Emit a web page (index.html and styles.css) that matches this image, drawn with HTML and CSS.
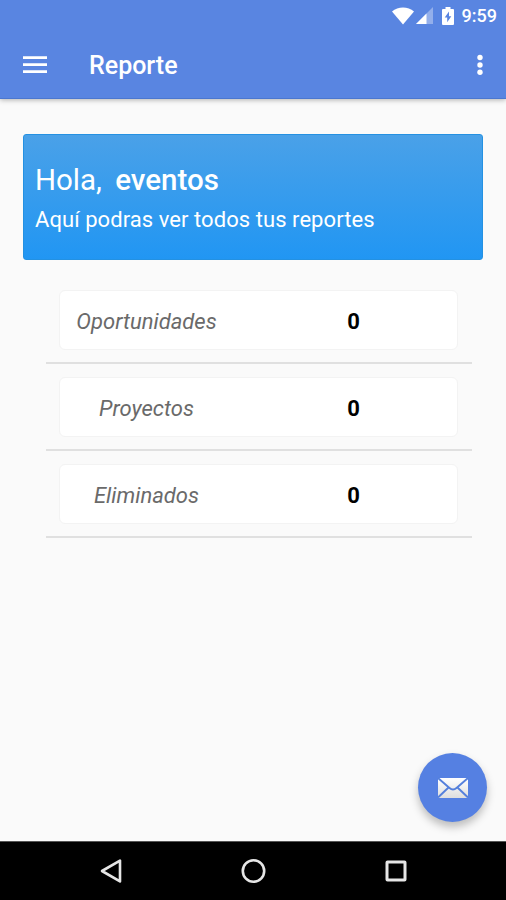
FILE: index.html
```
<!DOCTYPE html>
<html lang="es">
<head>
    <meta charset="UTF-8">
    <meta name="viewport" content="width=device-width, initial-scale=1.0">
    <title>Reporte</title>
    <link rel="stylesheet" href="styles.css">
</head>
<body>
    <header class="header">
        <div class="status-bar">
            <svg class="wifi" width="22" height="18" viewBox="0 0 22 18">
                <path d="M0 4.500C6-1 16-1 22 4.500L11 17.500z" fill="#fff"/>
            </svg>
            <svg class="signal" width="17" height="17" viewBox="0 0 17 17">
                <path d="M17 0V17H0z" fill="#fff" fill-opacity=".35"/>
                <path d="M10.500 6.500V17H0z" fill="#fff"/>
            </svg>
            <svg class="battery" width="12" height="18" viewBox="0 0 12 18">
                <path d="M3.500 0h5v2H11q1 0 1 1v14q0 1-1 1H1q-1 0-1-1V3q0-1 1-1h2.500z" fill="#fff"/>
                <path d="M7 4.500L2.700 10.500H5.200V15.200L9.300 9.200H7z" fill="#5985e1"/>
            </svg>
            <span class="time">9:59</span>
        </div>
        <div class="toolbar">
            <button class="icon-button" aria-label="Menu">
                <svg width="24" height="18" viewBox="0 0 24 18">
                    <path d="M0 1.700h24M0 8.700h24M0 15.700h24" stroke="#fff" stroke-width="2.800"/>
                </svg>
            </button>
            <h1>Reporte</h1>
            <button class="icon-button" aria-label="Opciones">
                <svg width="6" height="22" viewBox="0 0 6 22" fill="#fff">
                    <circle cx="3" cy="3.500" r="2.700"/>
                    <circle cx="3" cy="11" r="2.700"/>
                    <circle cx="3" cy="18.300" r="2.700"/>
                </svg>
            </button>
        </div>
    </header>

    <main class="content">
        <section class="welcome">
            <p class="greeting">Hola, <strong>eventos</strong></p>
            <p class="subtitle">Aquí podras ver todos tus reportes</p>
        </section>

        <ul class="reports">
            <li>
                <div class="report">
                    <span class="label">Oportunidades</span>
                    <span class="count">0</span>
                </div>
            </li>
            <li>
                <div class="report">
                    <span class="label">Proyectos</span>
                    <span class="count">0</span>
                </div>
            </li>
            <li>
                <div class="report">
                    <span class="label">Eliminados</span>
                    <span class="count">0</span>
                </div>
            </li>
        </ul>

        <!-- Floating mail button -->
        <button class="fab" aria-label="Correo">
            <svg width="32" height="22" viewBox="0 0 32 22">
                <defs>
                    <linearGradient id="paper" x1="0" y1="0" x2="0" y2="1">
                        <stop offset="0" stop-color="#fff"/>
                        <stop offset="1" stop-color="#dedede"/>
                    </linearGradient>
                </defs>
                <rect x="1" y="1" width="30" height="20" rx="1" fill="url(#paper)"/>
                <path d="M1 1L12.500 11Q16 14 19.500 11L31 1M1 20.500L11.500 10.500M31 20.500L20.500 10.500" fill="none" stroke="#5580dc" stroke-width="1.900"/>
            </svg>
        </button>
    </main>

    <nav class="nav-bar">
        <svg width="22" height="26" viewBox="0 0 22 26">
            <path d="M2 13L20 2.600V23.400z" fill="none" stroke="#e6e6e6" stroke-width="2.600" stroke-linejoin="round"/>
        </svg>
        <svg width="26" height="26" viewBox="0 0 26 26">
            <circle cx="12.500" cy="13" r="10.700" fill="none" stroke="#e6e6e6" stroke-width="2.600"/>
        </svg>
        <svg width="22" height="22" viewBox="0 0 22 22">
            <rect x="2" y="2" width="18" height="18" rx=".5" fill="none" stroke="#e6e6e6" stroke-width="3"/>
        </svg>
    </nav>
</body>
</html>
```

FILE: styles.css
```
* {
    box-sizing: border-box;
}

body {
    margin: 0;
    height: 100vh;
    display: flex;
    flex-direction: column;
    font-family: Roboto, sans-serif;
    background: #fafafa;
    overflow: hidden;
}

h1, p, ul {
    margin: 0;
    padding: 0;
}

svg {
    display: block;
}

button {
    border: none;
    padding: 0;
    cursor: pointer;
}

.header {
    height: 99px;
    background: #5985e1;
    border-bottom: 1px solid #4b77cf;
    color: #fff;
    box-shadow: 0 1px 5px rgba(0, 0, 0, 0.3);
}

.status-bar {
    height: 31px;
    padding-right: 9px;
    display: flex;
    align-items: center;
    justify-content: flex-end;
}

.wifi {
    margin-right: 2px;
}

.battery {
    margin: 0 8px 0 9px;
}

.time {
    font-size: 18px;
    font-weight: 500;
    line-height: 32px;
}

.toolbar {
    height: 67px;
    padding: 0 23px;
    display: flex;
    align-items: center;
}

.icon-button {
    background: none;
}

.toolbar h1 {
    flex: 1;
    margin-left: 42px;
    padding-top: 2px;
    font-size: 25px;
    font-weight: 500;
    line-height: 66px;
}

.content {
    flex: 1;
    padding: 35px 23px 0;
    position: relative;
}

.welcome {
    height: 126px;
    padding: 26px 12px 0;
    border: 1px solid #2491e2;
    border-radius: 3px;
    background: linear-gradient(#4aa1e8, #2196f3);
    color: #fff;
}

.greeting {
    margin-left: -1px;
    font-size: 29.5px;
    font-weight: 400;
    line-height: 38px;
}

.greeting strong {
    margin-left: 6px;
    font-weight: 500;
}

.subtitle {
    margin-top: 7px;
    margin-left: -1px;
    font-size: 22px;
    line-height: 28px;
    letter-spacing: 0.06px;
}

.reports {
    margin: 17px 11px 0 23px;
    list-style: none;
}

.reports li {
    height: 87px;
    padding: 13px 14px 0 13px;
    border-bottom: 2px solid #e0e0e0;
}

.report {
    height: 60px;
    padding-top: 2px;
    display: grid;
    grid-template-columns: 173px 207px;
    justify-content: space-between;
    align-items: center;
    border: 1px solid #f3f3f3;
    border-radius: 6px;
    background: #fff;
    text-align: center;
    font-size: 22px;
}

.label {
    color: #6a6a6a;
    font-style: italic;
}

.count {
    color: #000;
    font-weight: 700;
}

.fab {
    position: absolute;
    right: 19px;
    bottom: 19px;
    width: 69px;
    height: 69px;
    display: flex;
    align-items: center;
    justify-content: center;
    border-radius: 50%;
    background: #5580e2;
    box-shadow: 0 5px 9px rgba(0, 0, 0, 0.25);
}

.nav-bar {
    height: 59px;
    padding: 0 99px 0 100px;
    display: flex;
    align-items: center;
    justify-content: space-between;
    border-top: 1px solid #555;
    background: #000;
}
```
